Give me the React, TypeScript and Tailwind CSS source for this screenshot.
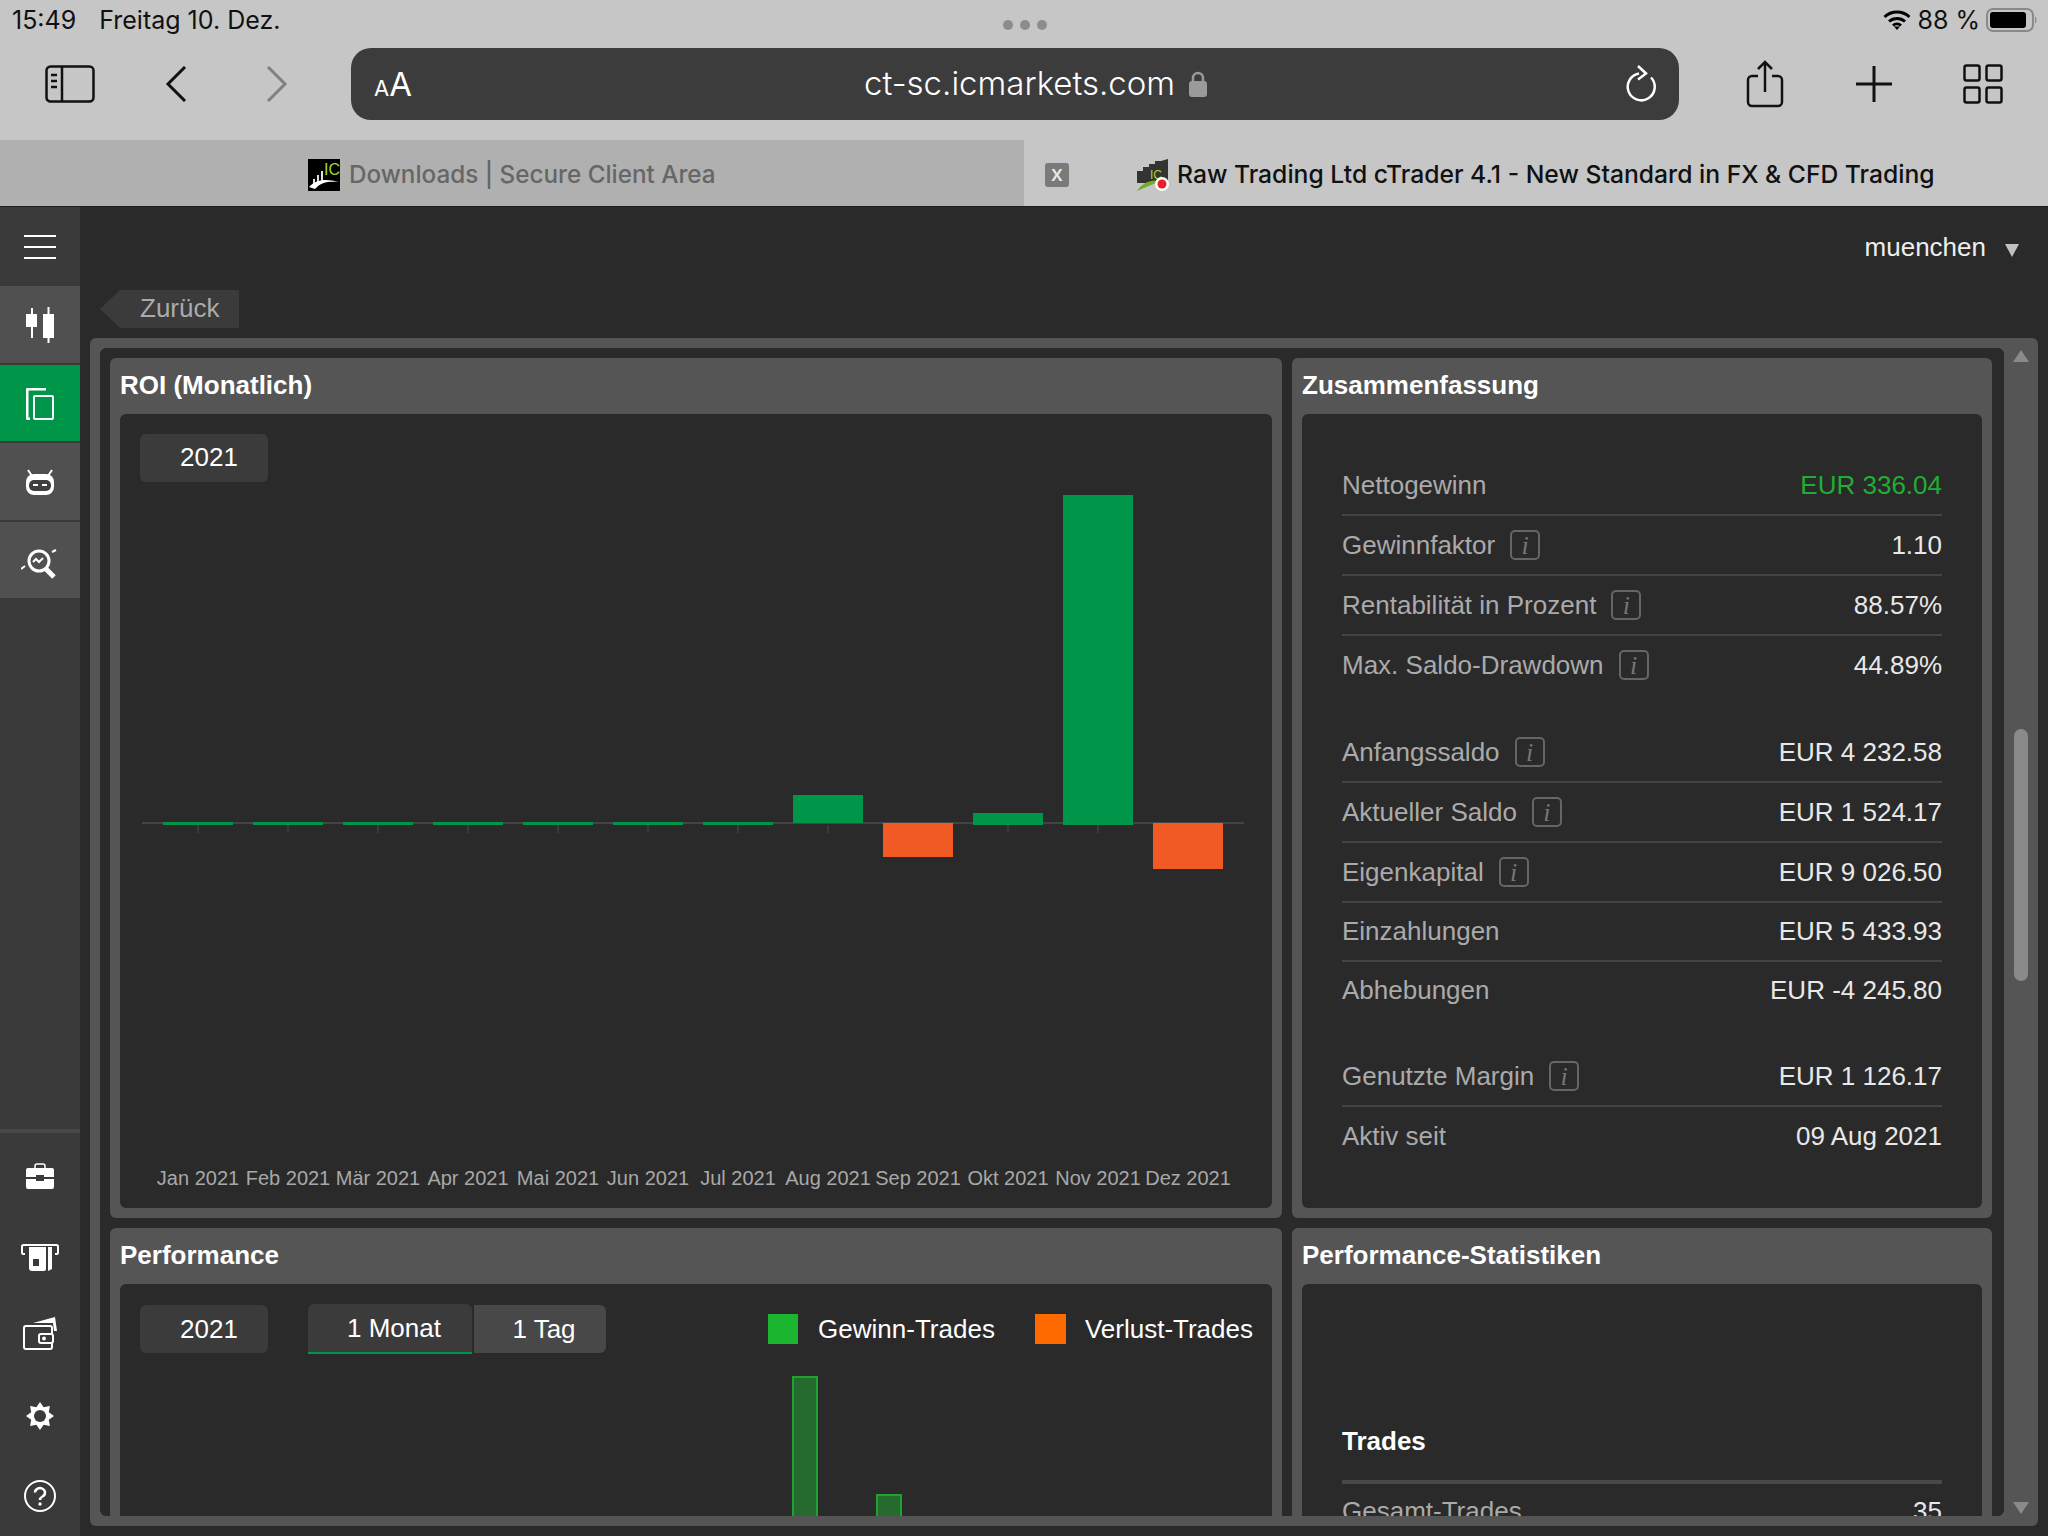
import type { ReactNode } from 'react';

const months = ['Jan 2021', 'Feb 2021', 'Mär 2021', 'Apr 2021', 'Mai 2021', 'Jun 2021', 'Jul 2021', 'Aug 2021', 'Sep 2021', 'Okt 2021', 'Nov 2021', 'Dez 2021'];

// y positions are relative to the chart svg, axis sits at y=341
const roiBars = [
  { y: 340, h: 3, fill: '#00964a' },
  { y: 340, h: 3, fill: '#00964a' },
  { y: 340, h: 3, fill: '#00964a' },
  { y: 340, h: 3, fill: '#00964a' },
  { y: 340, h: 3, fill: '#00964a' },
  { y: 340, h: 3, fill: '#00964a' },
  { y: 340, h: 3, fill: '#00964a' },
  { y: 313, h: 28, fill: '#00964a' },
  { y: 341, h: 34, fill: '#f25a25' },
  { y: 331, h: 12, fill: '#00964a' },
  { y: 13, h: 330, fill: '#00964a' },
  { y: 341, h: 46, fill: '#f25a25' },
];

// eight pointed cog outline
const gearPoints = Array.from({ length: 16 }, (_, i) => {
  const r = i % 2 === 0 ? 14 : 9.5;
  const a = (i * Math.PI) / 8 - Math.PI / 2;
  return `${14 + r * Math.cos(a)},${14 + r * Math.sin(a)}`;
}).join(' ');

function InfoBox() {
  return (
    <span className="ml-[15px] w-[30px] h-[30px] border-2 border-[#666666] rounded-[5px] flex items-center justify-center font-['Liberation_Serif',serif] italic text-[26px] text-[#777777]">
      i
    </span>
  );
}

function Row({ label, value, info, line = true, green, h = 60 }: { label: string; value: string; info?: boolean; line?: boolean; green?: boolean; h?: number }) {
  return (
    <div
      className={`flex items-center justify-between border-b-2 ${h === 60 ? 'h-[60px]' : 'h-[59px]'} ${line ? 'border-[#444444]' : 'border-transparent'}`}
    >
      <div className="flex items-center text-[#aaaaaa]">
        {label}
        {info && <InfoBox />}
      </div>
      <div className={green ? 'text-[#1fae33]' : 'text-[#e8e8e8]'}>{value}</div>
    </div>
  );
}

function Card({ title, className, children }: { title: string; className: string; children: ReactNode }) {
  return (
    <div className={`bg-[#555555] rounded-[6px] px-[10px] pb-[10px] flex flex-col ${className}`}>
      <div className="h-[56px] shrink-0 flex items-center pb-[2px] font-bold text-white">{title}</div>
      <div className="flex-1 bg-[#2a2a2a] rounded-[6px] overflow-hidden">{children}</div>
    </div>
  );
}

function SideItem({ children, active }: { children: ReactNode; active?: boolean }) {
  return (
    <div className={`h-[78px] mb-[2px] flex items-center justify-center ${active ? 'bg-[#00964a]' : 'bg-[#505050]'}`}>
      {children}
    </div>
  );
}

function BottomItem({ children }: { children: ReactNode }) {
  return <div className="h-[80px] shrink-0 flex items-center justify-center">{children}</div>;
}

function Sidebar() {
  return (
    <div className="w-[80px] shrink-0 bg-[#3a3a3a] flex flex-col overflow-hidden">
      <div className="h-[79px] shrink-0 flex items-center justify-center">
        <svg width="32" height="26" viewBox="0 0 32 26" fill="#ffffff">
          <rect y="1" width="32" height="2" />
          <rect y="12" width="32" height="2" />
          <rect y="23" width="32" height="2" />
        </svg>
      </div>
      <SideItem>
        <svg className="mt-[2px]" width="28" height="36" viewBox="0 0 28 36" fill="#ffffff">
          <rect x="0" y="7" width="11" height="13" />
          <rect x="5" y="1" width="2" height="30" />
          <rect x="17" y="7" width="11" height="24" />
          <rect x="21.500" y="0" width="2" height="36" />
        </svg>
      </SideItem>
      <SideItem active>
        <svg className="mt-[2px]" width="28" height="32" viewBox="0 0 28 32" fill="none" stroke="#ffffff">
          <path d="M4 31H2.500A1.500 1.500 0 0 1 1 29.500V3A2 2 0 0 1 3 1H20" strokeWidth="3" />
          <rect x="8" y="8" width="19" height="23" rx="1" strokeWidth="2" />
        </svg>
      </SideItem>
      <SideItem>
        <svg className="mt-[2px]" width="28" height="26" viewBox="0 0 28 26">
          <path d="M2 1l4 6M26 1l-4 6" stroke="#ffffff" strokeWidth="2" />
          <rect x="0" y="5" width="28" height="21" rx="8" fill="#ffffff" />
          <rect x="3" y="11" width="22" height="11" rx="5" fill="#3f3f3f" />
          <rect x="7" y="15" width="5" height="2" fill="#ffffff" />
          <rect x="16" y="15" width="5" height="2" fill="#ffffff" />
        </svg>
      </SideItem>
      <SideItem>
        <svg className="mt-[8px]" width="38" height="32" viewBox="0 0 38 32" fill="none" stroke="#ffffff">
          <circle cx="18" cy="13" r="10" strokeWidth="3" />
          <path d="M12 14l3-3 3 3 4-4" strokeWidth="2" />
          <path d="M25 21l8 8" strokeWidth="5" />
          <path d="M0 21l4-3M31 4l4-2" strokeWidth="2" />
        </svg>
      </SideItem>
      <div className="h-[4px] shrink-0 bg-[#484848] mt-[529px]" />
      <div className="h-[3px] shrink-0" />
      <BottomItem>
        <svg width="28" height="26" viewBox="0 0 28 26" fill="#ffffff">
          <path d="M9 5V3a2 2 0 0 1 2-2h6a2 2 0 0 1 2 2v2" fill="none" stroke="#ffffff" strokeWidth="1.500" />
          <path d="M2 5h24a2 2 0 0 1 2 2v7H18v-2H10v2H0V7a2 2 0 0 1 2-2z" />
          <path d="M0 16h10v2h8v-2h10v8a2 2 0 0 1-2 2H2a2 2 0 0 1-2-2z" />
        </svg>
      </BottomItem>
      <BottomItem>
        <svg className="mt-[2px]" width="38" height="27" viewBox="0 0 38 27">
          <path d="M4 10H2.500A1.500 1.500 0 0 1 1 8.500V2.500A1.500 1.500 0 0 1 2.500 1h33A1.500 1.500 0 0 1 37 2.500v6A1.500 1.500 0 0 1 35.500 10H34" fill="none" stroke="#ffffff" strokeWidth="2" />
          <path d="M8 3h17v22a2 2 0 0 1-2 2H11a3 3 0 0 1-3-3z" fill="#ffffff" />
          <path d="M27 3h4v22l-4 2z" fill="#ffffff" />
          <rect x="12" y="15" width="6" height="7" fill="#3a3a3a" />
        </svg>
      </BottomItem>
      <BottomItem>
        <svg className="mb-[6px]" width="34" height="34" viewBox="0 0 34 34">
          <path d="M10 7L32 1l2 14h-3l-1-8z" fill="#ffffff" />
          <rect x="1" y="10" width="28" height="23" rx="2" fill="none" stroke="#ffffff" strokeWidth="2" />
          <rect x="16" y="18" width="14" height="9" rx="2" fill="#3a3a3a" stroke="#ffffff" strokeWidth="2" />
          <circle cx="21" cy="22.500" r="2" fill="#ffffff" />
        </svg>
      </BottomItem>
      <BottomItem>
        <svg width="28" height="28" viewBox="0 0 28 28">
          <polygon points={gearPoints} fill="#ffffff" />
          <circle cx="14" cy="14" r="6" fill="#3a3a3a" />
        </svg>
      </BottomItem>
      <BottomItem>
        <svg width="32" height="32" viewBox="0 0 32 32" fill="none">
          <circle cx="16" cy="16" r="15" stroke="#ffffff" strokeWidth="2" />
          <path d="M11 12.500a5 4.500 0 1 1 7.500 4c-1.800 1-2.500 2-2.500 3.500" stroke="#ffffff" strokeWidth="2.500" />
          <circle cx="16" cy="24" r="1.700" fill="#ffffff" />
        </svg>
      </BottomItem>
    </div>
  );
}

function BrowserChrome() {
  return (
    <div className="shrink-0 font-['Inter',sans-serif]">
      <div className="h-[140px] bg-[#c6c6c6] flex flex-col">
        <div className="h-[48px] grid grid-cols-[1fr_auto_1fr] items-start pl-[12px] pr-[10px] pt-[6px] text-[#111111] text-[25px] leading-[28px]">
          <div className="flex gap-[23px]">
            <span>15:49</span>
            <span>Freitag 10. Dez.</span>
          </div>
          <div className="flex gap-[7px] pt-[14px]">
            <span className="w-[10px] h-[10px] rounded-full bg-[#8c8c8c]" />
            <span className="w-[10px] h-[10px] rounded-full bg-[#8c8c8c]" />
            <span className="w-[10px] h-[10px] rounded-full bg-[#8c8c8c]" />
          </div>
          <div className="flex items-center justify-end gap-[6px]">
            <svg width="28" height="20" viewBox="0 0 28 20" fill="none" stroke="#000000" strokeWidth="3">
              <path d="M1.500 7a18 18 0 0 1 25 0" />
              <path d="M6 11.500a12 12 0 0 1 16 0" />
              <path d="M10 15.500a6 6 0 0 1 8 0" />
              <path d="M14 20l-3-3.500h6z" fill="#000000" stroke="none" />
            </svg>
            <span>88 %</span>
            <svg width="52" height="24" viewBox="0 0 52 24" fill="none">
              <rect x="1" y="1" width="46" height="22" rx="6" stroke="#8a8a8a" strokeWidth="2" />
              <rect x="4" y="4" width="36" height="16" rx="3" fill="#000000" />
              <path d="M49 8.500c2 1 2 6 0 7z" fill="#8a8a8a" />
            </svg>
          </div>
        </div>
        <div className="h-[72px] flex items-center">
          <div className="w-[351px] shrink-0 flex items-center pl-[45px]">
            <svg width="50" height="38" viewBox="0 0 50 38" fill="none" stroke="#111111" strokeWidth="2.500">
              <rect x="1.500" y="1.500" width="47" height="35" rx="4" />
              <path d="M17 1.500v35" />
              <path d="M6 10h6M6 16h6M6 22h6" />
            </svg>
            <svg className="ml-[70px]" width="22" height="36" viewBox="0 0 22 36" fill="none" stroke="#111111" strokeWidth="3">
              <path d="M20 1L3 18l17 17" />
            </svg>
            <svg className="ml-[79px]" width="22" height="36" viewBox="0 0 22 36" fill="none" stroke="#808080" strokeWidth="3">
              <path d="M2 1l17 17L2 35" />
            </svg>
          </div>
          <div className="w-[1328px] h-[72px] shrink-0 bg-[#3c3c3c] rounded-[20px] flex items-center justify-between pl-[23px] pr-[21px] text-white relative">
            <span className="flex items-baseline pt-[2px]">
              <span className="text-[22px]">A</span>
              <span className="text-[33px]">A</span>
            </span>
            <span className="absolute left-[513px] flex items-center gap-[14px] text-[33px] font-light">
              ct-sc.icmarkets.com
              <svg width="18" height="26" viewBox="0 0 18 26" fill="#9a9a9a">
                <path d="M4 11V7a5 5 0 0 1 10 0v4" fill="none" stroke="#9a9a9a" strokeWidth="2.500" />
                <rect x="0" y="10" width="18" height="16" rx="3" />
              </svg>
            </span>
            <svg width="32" height="38" viewBox="0 0 32 38" fill="none" stroke="#ffffff" strokeWidth="2.500">
              <path d="M13 8.500a13.500 13.500 0 1 0 12 4" />
              <path d="M12 1l8 7.500-8 6" />
            </svg>
          </div>
          <div className="flex items-center pl-[67px]">
            <svg width="38" height="48" viewBox="0 0 38 48" fill="none" stroke="#111111" strokeWidth="2.500">
              <path d="M12 16H6a4 4 0 0 0-4 4v22a4 4 0 0 0 4 4h26a4 4 0 0 0 4-4V20a4 4 0 0 0-4-4h-6" />
              <path d="M19 32V2M12 9l7-7 7 7" />
            </svg>
            <svg className="ml-[72px]" width="36" height="36" viewBox="0 0 36 36" stroke="#111111" strokeWidth="3">
              <path d="M18 0v36M0 18h36" />
            </svg>
            <svg className="ml-[71px]" width="40" height="40" viewBox="0 0 40 40" fill="none" stroke="#111111" strokeWidth="2.500">
              <rect x="1.500" y="1.500" width="15" height="15" rx="2" />
              <rect x="23.500" y="1.500" width="15" height="15" rx="2" />
              <rect x="1.500" y="23.500" width="15" height="15" rx="2" />
              <rect x="23.500" y="23.500" width="15" height="15" rx="2" />
            </svg>
          </div>
        </div>
      </div>
      <div className="h-[67px] flex border-b border-[#1f1f1f] font-medium">
        <div className="w-[1024px] bg-[#b0b0b0] flex items-center pt-[4px] pl-[308px] gap-[9px] text-[#666666] text-[24.250px]">
          <svg width="32" height="32" viewBox="0 0 32 32">
            <rect width="32" height="32" fill="#000000" />
            <path d="M5 20h2v5H5zM9 16h2v8H9zM13 12h2v11h-2z" fill="#dddddd" />
            <path d="M1 28c6-7 16-9 30-5-10-1-18 0-24 7z" fill="#ffffff" />
            <text x="16" y="16" fontSize="16" fontFamily="Liberation Sans" fill="#a4d82a">IC</text>
          </svg>
          <span>Downloads | Secure Client Area</span>
        </div>
        <div className="flex-1 bg-[#c6c6c6] flex items-center pt-[4px] text-[#111111] text-[24.700px]">
          <span className="ml-[21px] w-[24px] h-[24px] rounded-[3px] bg-[#7a7a7a] text-[#e8e8e8] text-[22px] pb-[3px] flex items-center justify-center">x</span>
          <svg className="ml-[67px]" width="33" height="32" viewBox="0 0 33 32">
            <path d="M1 12h6V8h6V5h6V2h6l7-2v24H1z" fill="#333333" />
            <path d="M1 32c5-8 14-12 24-10L15 26z" fill="#6fae2a" />
            <text x="14" y="20" fontSize="12" fontFamily="Liberation Sans" fill="#a4d82a">IC</text>
            <circle cx="26" cy="25" r="7" fill="#ffffff" />
            <circle cx="26" cy="25" r="4.500" fill="#e8202a" />
          </svg>
          <span className="ml-[8px]">Raw Trading Ltd cTrader 4.1 - New Standard in FX &amp; CFD Trading</span>
        </div>
      </div>
    </div>
  );
}

function RoiCard() {
  return (
    <Card title="ROI (Monatlich)" className="h-[860px]">
      <div className="flex flex-col h-full pt-[20px]">
        <div className="ml-[20px] w-[128px] h-[48px] pl-[10px] pb-[1px] rounded-[6px] bg-[#3b3b3b] text-white flex items-center justify-center shrink-0">2021</div>
        <svg width="1151" height="670" viewBox="0 0 1151 670" className="shrink-0">
          <rect x="22" y="340" width="1102" height="2" fill="#444444" />
          {roiBars.map((b, i) => (
            <g key={i}>
              <rect x={77.500 + i * 90} y="343" width="1" height="8" fill="#4a4a4a" />
              <rect x={43 + i * 90} y={b.y} width="70" height={b.h} fill={b.fill} />
            </g>
          ))}
        </svg>
        <div className="flex mt-[12px] ml-[33px] text-[20px] leading-[28px] text-[#a8a8a8]">
          {months.map((m) => (
            <div key={m} className="w-[90px] shrink-0 text-center whitespace-nowrap">
              {m}
            </div>
          ))}
        </div>
      </div>
    </Card>
  );
}

function SummaryCard() {
  return (
    <Card title="Zusammenfassung" className="h-[860px]">
      <div className="pt-[42px] px-[40px] flex flex-col">
        <Row label="Nettogewinn" value="EUR 336.04" green />
        <Row label="Gewinnfaktor" value="1.10" info />
        <Row label="Rentabilität in Prozent" value="88.57%" info />
        <Row label="Max. Saldo-Drawdown" value="44.89%" info line={false} />
        <div className="mt-[27px]">
          <Row label="Anfangssaldo" value="EUR 4 232.58" info />
          <Row label="Aktueller Saldo" value="EUR 1 524.17" info />
          <Row label="Eigenkapital" value="EUR 9 026.50" info />
          <Row label="Einzahlungen" value="EUR 5 433.93" h={59} />
          <Row label="Abhebungen" value="EUR -4 245.80" line={false} h={59} />
        </div>
        <div className="mt-[26px]">
          <Row label="Genutzte Margin" value="EUR 1 126.17" info />
          <Row label="Aktiv seit" value="09 Aug 2021" line={false} />
        </div>
      </div>
    </Card>
  );
}

function PerformanceCard() {
  return (
    <Card title="Performance" className="h-[600px]">
      <div className="pt-[20px]">
        <div className="flex items-center h-[50px] pl-[20px] pr-[19px] text-white">
          <div className="w-[128px] h-[48px] pl-[10px] rounded-[6px] bg-[#3b3b3b] flex items-center justify-center">2021</div>
          <div className="ml-[40px] w-[164px] h-[50px] pl-[8px] rounded-t-[6px] bg-[#3b3b3b] border-b-2 border-[#00964a] flex items-center justify-center">1 Monat</div>
          <div className="ml-[2px] w-[132px] h-[48px] pl-[8px] rounded-r-[6px] bg-[#484848] flex items-center justify-center">1 Tag</div>
          <div className="ml-auto flex items-center">
            <span className="w-[30px] h-[30px] bg-[#1bb52f]" />
            <span className="ml-[20px]">Gewinn-Trades</span>
            <span className="ml-[40px] w-[31px] h-[30px] bg-[#ff6a00]" />
            <span className="ml-[19px]">Verlust-Trades</span>
          </div>
        </div>
        <svg width="1151" height="200" viewBox="0 0 1151 200" className="mt-[22px]">
          <rect x="673" y="1" width="24" height="200" fill="#256b2f" stroke="#1fa32f" strokeWidth="2" />
          <rect x="757" y="119" width="24" height="90" fill="#256b2f" stroke="#1fa32f" strokeWidth="2" />
        </svg>
      </div>
    </Card>
  );
}

function StatsCard() {
  return (
    <Card title="Performance-Statistiken" className="h-[600px]">
      <div className="pt-[138px] px-[40px]">
        <div className="h-[38px] flex items-center font-bold text-white">Trades</div>
        <div className="h-[4px] mt-[20px] bg-[#484848]" />
        <div className="-mt-[2px]">
          <Row label="Gesamt-Trades" value="35" line={false} />
        </div>
      </div>
    </Card>
  );
}

export default function App() {
  return (
    <div className="w-[2048px] h-[1536px] flex flex-col overflow-hidden bg-[#2a2a2a] font-['Liberation_Sans',sans-serif] text-[26px]">
      <BrowserChrome />
      <div className="flex-1 min-h-0 flex">
        <Sidebar />
        <div className="flex-1 min-w-0 flex flex-col">
          <div className="h-[83px] shrink-0 flex items-start justify-end pt-[23px] pr-[29px] text-[#eeeeee]">
            <span className="leading-[34px]">muenchen</span>
            <svg className="ml-[19px] mt-[14px]" width="14" height="13" viewBox="0 0 14 13" fill="#c0c0c0">
              <path d="M0 0h14L7 13z" />
            </svg>
          </div>
          <div className="ml-[20px] w-[139px] h-[38px] shrink-0 bg-[#3b3b3b] pl-[40px] pb-[2px] flex items-center text-[#aaaaaa] [clip-path:polygon(20px_0,100%_0,100%_100%,20px_100%,0_50%)]">
            Zurück
          </div>
          <div className="mt-[10px] mb-[10px] ml-[10px] mr-[10px] flex-1 min-h-0 bg-[#555555] rounded-[6px] flex pl-[10px] py-[10px]">
            <div className="w-[1904px] shrink-0 h-full bg-[#2a2a2a] rounded-[6px] overflow-hidden p-[10px]">
              <div className="grid grid-cols-[1172px_700px] gap-x-[10px] gap-y-[10px]">
                <RoiCard />
                <SummaryCard />
                <PerformanceCard />
                <StatsCard />
              </div>
            </div>
            <div className="flex-1 flex flex-col items-center pt-[2px] pb-[2px]">
              <svg width="16" height="12" viewBox="0 0 16 12" fill="#8a8a8a">
                <path d="M8 0l8 12H0z" />
              </svg>
              <div className="w-[14px] h-[252px] mt-[367px] rounded-[7px] bg-[#8a8a8a]" />
              <svg className="mt-auto" width="16" height="12" viewBox="0 0 16 12" fill="#8a8a8a">
                <path d="M0 0h16L8 12z" />
              </svg>
            </div>
          </div>
        </div>
      </div>
    </div>
  );
}
